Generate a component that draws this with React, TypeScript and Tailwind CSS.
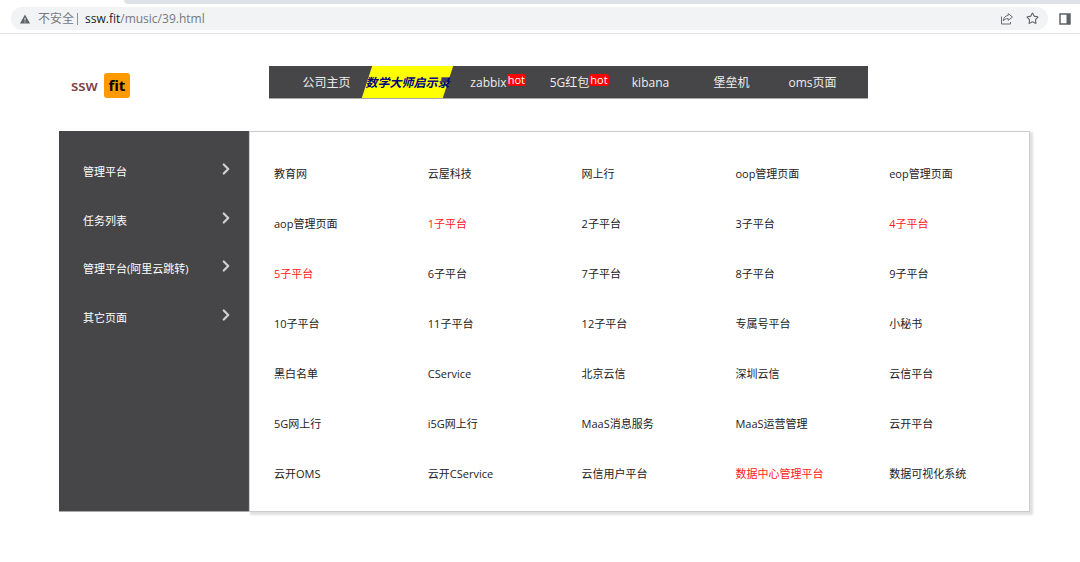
import { ChevronRight, Star } from 'lucide-react';
import clsx from 'clsx';

interface NavItem {
  label: string;
  hot?: boolean;
  active?: boolean;
}

const navItems: NavItem[] = [
  { label: '公司主页' },
  { label: '数学大师启示录', active: true },
  { label: 'zabbix', hot: true },
  { label: '5G红包', hot: true },
  { label: 'kibana' },
  { label: '堡垒机' },
  { label: 'oms页面' },
];

const categories = ['管理平台', '任务列表', '管理平台(阿里云跳转)', '其它页面'];

const platforms = [
  '教育网', '云屋科技', '网上行', 'oop管理页面', 'eop管理页面',
  'aop管理页面', '1子平台', '2子平台', '3子平台', '4子平台',
  '5子平台', '6子平台', '7子平台', '8子平台', '9子平台',
  '10子平台', '11子平台', '12子平台', '专属号平台', '小秘书',
  '黑白名单', 'CService', '北京云信', '深圳云信', '云信平台',
  '5G网上行', 'i5G网上行', 'MaaS消息服务', 'MaaS运营管理', '云开平台',
  '云开OMS', '云开CService', '云信用户平台', '数据中心管理平台', '数据可视化系统',
];

const highlighted = ['1子平台', '4子平台', '5子平台', '数据中心管理平台'];

const AddressBar = () => (
  <div className="border-b border-[#e2e3e5] pb-[3px]">
    {/* Tab strip */}
    <div className="ml-[124px] h-1 rounded-bl-md bg-[#dee1e6]" />

    <div className="mt-[3px] flex items-center pl-[11px] pr-[9px]">
      <div className="flex h-[23px] flex-1 items-center rounded-full bg-[#f1f3f4] pl-[9px] pr-[9px] text-[12px] text-[#77797c]">
        <svg className="h-[10px] w-[10px]" viewBox="0 0 10 10" aria-hidden="true">
          <path d="M5 0.5 10 9.5H0Z" fill="#5f6368" />
          <path d="M4.5 3.8h1v2.8h-1zM4.5 7.4h1v1h-1z" fill="#f1f3f4" />
        </svg>
        <span className="ml-2">不安全</span>
        <span className="ml-[3px] h-3 w-px bg-[#8f9194]" />
        <span className="ml-[7px] flex-1">
          <span className="text-[#202124]">ssw.fit</span>/music/39.html
        </span>
        <button type="button" aria-label="分享" className="mr-[13px]">
          <svg className="h-[13px] w-[13px]" viewBox="0 0 13 13" fill="none" stroke="#6b6e72" strokeLinejoin="round">
            <path d="M1.5 4.5V12h9V10" />
            <path d="M8.2 1.6 12.5 5 8.2 8.4V6.6C5.8 6.5 4.4 7.2 3.2 9 3.6 6 5 3.8 8.2 3.4Z" />
          </svg>
        </button>
        <button type="button" aria-label="收藏">
          <Star className="h-[13px] w-[13px] text-[#5f6368]" strokeWidth={2} strokeLinejoin="miter" />
        </button>
      </div>
      <button type="button" aria-label="侧边栏" className="ml-[11px]">
        <svg className="h-3 w-3" viewBox="0 0 12 12">
          <path d="M1 1h10v10H1z" fill="none" stroke="#5f6368" strokeWidth="1.5" />
          <path d="M7.5 1H11v10H7.5z" fill="#5f6368" />
        </svg>
      </button>
    </div>
  </div>
);

const Header = () => (
  <header className="flex h-[33px]">
    {/* Logo */}
    <a href="#" className="flex w-[210px] items-center gap-[6px] pl-3 pt-[6px] text-[15px] font-bold">
      <span className="font-semibold text-[#804040]">ssw</span>
      <span className="flex h-[25px] w-[26px] items-center justify-center rounded-[3px] bg-[#ff9900] text-black">
        fit
      </span>
    </a>

    <nav className="mr-[162px] flex flex-1 border-b border-[#a8a8a8] bg-[#464648] pl-[17px] pr-[15px] text-[12px] text-[#eeeeee]">
      {navItems.map(({ label, hot, active }) => (
        <a key={label} href="#" className="relative flex min-w-0 flex-1 items-center justify-center whitespace-nowrap pt-[2px]">
          {active && <span className="absolute inset-0 -skew-x-[18deg] bg-[#ffff00]" />}
          <span className={clsx('relative', active && 'font-bold italic text-[#000080]')}>
            {label}
            {hot && (
              <span className="absolute left-full top-0 rounded-[3px] bg-[#ff0000] px-px text-[11px] leading-[12px] text-white">
                hot
              </span>
            )}
          </span>
        </a>
      ))}
    </nav>
  </header>
);

export default function App() {
  return (
    <div className="bg-white pb-12 font-['Open_Sans','Noto_Sans_CJK_SC',sans-serif]">
      <AddressBar />

      <div className="ml-[59px] mr-[50px] pt-8">
        <Header />

        <main className="mt-8 flex min-h-[381px] text-[11px]">
          {/* Sidebar */}
          <aside className="w-[190px] border-b border-[#a8a8a8] bg-[#464648] pt-[17px] text-white">
            <ul className="grid h-[194px] grid-rows-4">
              {categories.map((name) => (
                <li key={name} className="flex">
                  <a href="#" className="flex flex-1 items-center justify-between pl-6 pr-[14px]">
                    {name}
                    <ChevronRight className="mb-[6px] h-[18px] w-[18px] text-[#d0d0d0]" strokeWidth={3} />
                  </a>
                </li>
              ))}
            </ul>
          </aside>

          {/* Platform links */}
          <section className="flex flex-1 border border-[#cccccc] px-[5px] pb-3 pt-[17px] shadow-[2px_2px_2px_1px_#e0e0e0]">
            <ul className="grid flex-1 auto-rows-fr grid-cols-5">
              {platforms.map((name) => (
                <li key={name} className="flex items-center pl-[19px]">
                  <a href="#" className={highlighted.includes(name) ? 'text-[#ff2020]' : 'text-[#222222]'}>
                    {name}
                  </a>
                </li>
              ))}
            </ul>
          </section>
        </main>
      </div>
    </div>
  );
}
